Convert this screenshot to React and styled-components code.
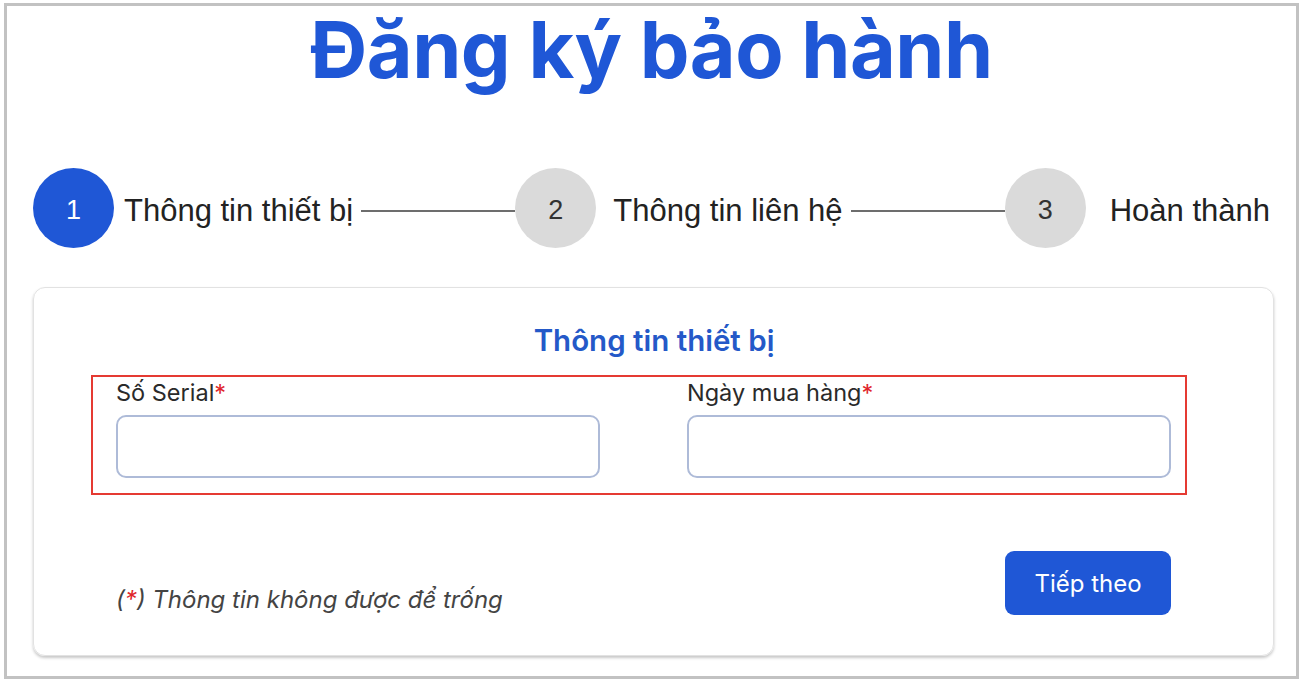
import React from 'react';
import styled, { createGlobalStyle, css } from 'styled-components';

const GlobalStyle = createGlobalStyle`
    html, body {
        margin: 0;
        padding: 0;
        background: #fff;
    }
    body {
        font-family: Inter, "Liberation Sans", Arial, sans-serif;
        color: #222;
    }
`

const steps = [
    { n: 1, label: 'Thông tin thiết bị', gap: 10 },
    { n: 2, label: 'Thông tin liên hệ', gap: 17 },
    { n: 3, label: 'Hoàn thành', gap: 24 },
];

const fields = [
    { label: 'Số Serial' },
    { label: 'Ngày mua hàng' },
];

export default function App() {
    const active = 1;

    return (
        <>
            <GlobalStyle />
            <Frame>
                <Title>Đăng ký bảo hành</Title>

                <Stepper>
                    {steps.map((step, i) => (
                        <React.Fragment key={step.n}>
                            <Step gap={step.gap}>
                                <Circle active={step.n === active}>{step.n}</Circle>
                                <StepLabel>{step.label}</StepLabel>
                            </Step>
                            {i < steps.length - 1 && <Line />}
                        </React.Fragment>
                    ))}
                </Stepper>

                <Card>
                    <CardTitle>Thông tin thiết bị</CardTitle>

                    <Highlight>
                        {fields.map(f => (
                            <Field key={f.label}>
                                <Label>{f.label}<Req>*</Req></Label>
                                <Input />
                            </Field>
                        ))}
                    </Highlight>

                    <Footer>
                        <Note>(<Req>*</Req>) Thông tin không được để trống</Note>
                        <Button>Tiếp theo</Button>
                    </Footer>
                </Card>
            </Frame>
        </>
    )
}

const Frame = styled.div`
    box-sizing: border-box;
    margin: 3px 5px 3px 4px;
    height: 676px;
    border: 3px solid #c2c2c2;
    display: flex;
    flex-direction: column;
`

const Title = styled.h1`
    margin: 0;
    text-align: center;
    font-family: Inter, "Liberation Sans", sans-serif;
    font-size: 79px;
    font-weight: 700;
    line-height: 86px;
    letter-spacing: -0.5px;
    color: #1f57d6;
`

const Stepper = styled.div`
    display: flex;
    align-items: center;
    margin: 76px 26px 0 26px;
    height: 80px;
`

const Step = styled.div`
    display: flex;
    align-items: center;
    gap: ${p => p.gap}px;
`

const Circle = styled.div`
    width: 81px;
    height: 80px;
    border-radius: 50%;
    display: flex;
    align-items: center;
    justify-content: center;
    font-family: "Liberation Sans", Arial, sans-serif;
    font-size: 27px;
    padding-top: 4px;
    box-sizing: border-box;
    background: #dadada;
    color: #333;

    ${p => p.active && css`
        background: #1f57d6;
        color: #fff;
    `}
`

const StepLabel = styled.span`
    padding-top: 6px;
    font-family: "Liberation Sans", Arial, sans-serif;
    font-size: 31px;
    color: #222;
    white-space: nowrap;
`

const Line = styled.div`
    flex: 1;
    height: 2px;
    margin: 6px 0 0 8px;
    background: #6d6d6d;
`

const Card = styled.div`
    box-sizing: border-box;
    margin: 39px 22px 0 26px;
    height: 369px;
    border: 1px solid #e2e2e2;
    border-radius: 12px;
    box-shadow: 0 2px 3px rgba(0,0,0,.22);
    display: flex;
    flex-direction: column;
    padding: 33px 86px 0 57px;
`

const CardTitle = styled.h2`
    margin: 0 0 0 30px;
    text-align: center;
    font-size: 29.5px;
    font-weight: 600;
    line-height: 38px;
    color: #2459c8;
`

const Highlight = styled.div`
    margin-top: 16px;
    height: 120px;
    box-sizing: border-box;
    border: 2px solid #e53a32;
    padding: 1px 14px 0 23px;
    display: grid;
    grid-template-columns: 484px 484px;
    justify-content: space-between;
`

const Field = styled.div`
    display: flex;
    flex-direction: column;
    gap: 7px;
`

const Label = styled.label`
    font-size: 23.5px;
    line-height: 30px;
    color: #2a2a2a;
`

const Req = styled.span`
    color: #e0242a;
`

const Input = styled.div`
    box-sizing: border-box;
    height: 63px;
    border: 2px solid #aebbd8;
    border-radius: 10px;
    background: #fff;
`

const Footer = styled.div`
    margin-top: 56px;
    padding: 0 16px 0 25px;
    display: flex;
    justify-content: space-between;
    align-items: flex-end;
`

const Note = styled.p`
    margin: 0;
    font-size: 24px;
    font-style: italic;
    line-height: 30px;
    color: #444;
`

const Button = styled.button`
    width: 166px;
    height: 64px;
    border: none;
    border-radius: 9px;
    background: #1f57d6;
    color: #fff;
    font-family: Inter, "Liberation Sans", sans-serif;
    font-size: 24px;
    cursor: pointer;
`
